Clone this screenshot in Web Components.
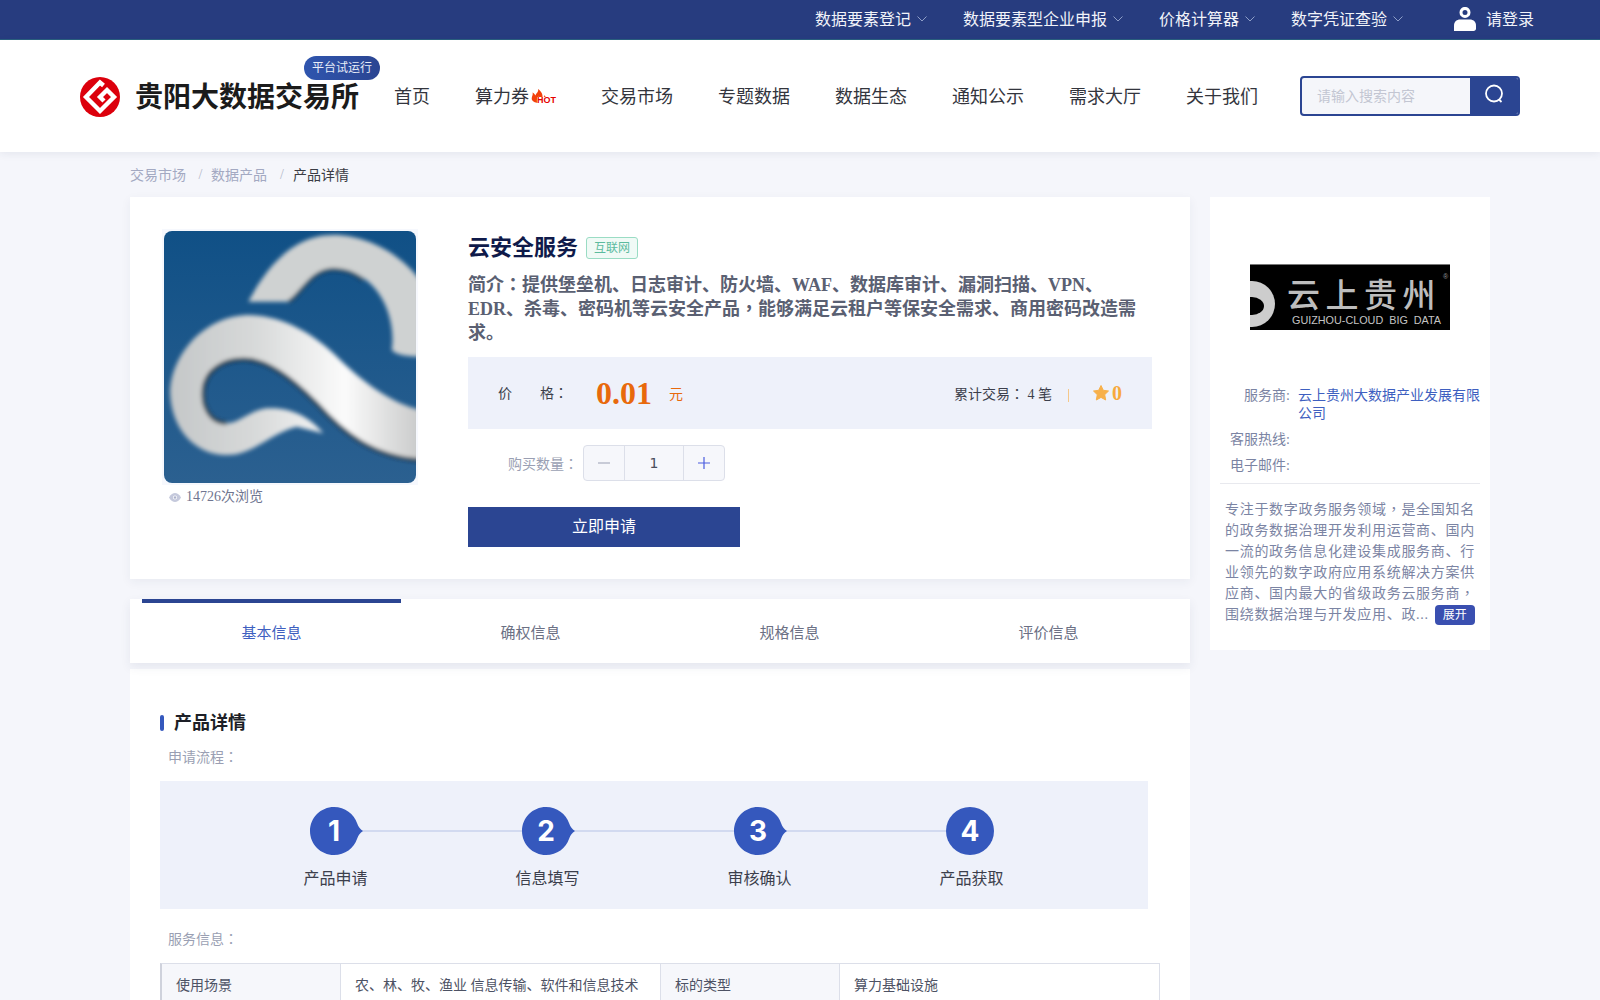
<!DOCTYPE html>
<html lang="zh-CN">
<head>
<meta charset="utf-8">
<title>云安全服务</title>
<style>
  html, body { margin: 0; height: 1000px; overflow: hidden; }
  body { background: #f5f6fb; font-family: "Liberation Serif", "Noto Sans CJK SC", serif; color: #333; }
  .page { display: grid; grid-template-columns: 1060px 280px; column-gap: 20px; padding-left: 130px; }
  .left { display: flex; flex-direction: column; }
</style>
</head>
<body>
<top-bar>
  <top-link>数据要素登记</top-link>
  <top-link>数据要素型企业申报</top-link>
  <top-link>价格计算器</top-link>
  <top-link>数字凭证查验</top-link>
</top-bar>
<site-header></site-header>
<bread-crumb></bread-crumb>
<div class="page">
  <div class="left">
    <product-card></product-card>
    <tab-bar></tab-bar>
    <detail-panel></detail-panel>
  </div>
  <provider-card></provider-card>
</div>

<script>
// the reference sets full-width colon and comma in the middle of their box
const pn = s => s.split(/([：，])/).map((part, i) => i % 2
    ? `<span lang="zh-TW" style="font-family:'Liberation Serif','Noto Sans CJK TC',serif">${part}</span>`
    : part && `<span>${part}</span>`).join('');

class TopLink extends HTMLElement {
    connectedCallback() {
        this.attachShadow({ mode: 'open' });
        this.shadowRoot.innerHTML = `
        <style>
          :host { display: flex; align-items: center; gap: 6px; font-size: 16px; color: #f1f3f9; }
          svg { width: 10px; height: 6px; margin-top: 2px; }
        </style>
        <slot></slot>
        <svg viewBox="0 0 10 6"><path d="M.5 .5 5 5 9.5 .5" fill="none" stroke="#8f9fc8" stroke-width="1"/></svg>`;
    }
}
customElements.define('top-link', TopLink);

class TopBar extends HTMLElement {
    connectedCallback() {
        this.attachShadow({ mode: 'open' });
        this.shadowRoot.innerHTML = `
        <style>
          :host { display: flex; justify-content: flex-end; align-items: center; gap: 36px; height: 35px;
            padding: 0 66px 4px 0; background: #273c7f; border-bottom: 1px solid #2a5f7f; }
          .login { display: flex; align-items: center; gap: 10px; margin-left: 15px; font-size: 16px; color: #f1f3f9; }
          svg { width: 22px; height: 24px; margin-top: 3px; }
        </style>
        <slot></slot>
        <div class="login">
          <svg viewBox="0 0 22 24">
            <circle cx="11" cy="5.400" r="4" fill="#273c7f" stroke="#fff" stroke-width="3"/>
            <path d="M0 24V18.500C0 14.500 3 12.500 6 12.500H16C19 12.500 22 14.500 22 18.500V21.500C22 23 21 24 19.500 24Z" fill="#fff"/>
          </svg>
          <span>请登录</span>
        </div>`;
    }
}
customElements.define('top-bar', TopBar);

class SiteHeader extends HTMLElement {
    connectedCallback() {
        const links = ['首页', '算力券', '交易市场', '专题数据', '数据生态', '通知公示', '需求大厅', '关于我们'];
        this.attachShadow({ mode: 'open' });
        this.shadowRoot.innerHTML = `
        <style>
          :host { display: flex; align-items: center; height: 112px; padding-left: 80px; background: #fff;
            box-shadow: 0 2px 8px rgba(40, 50, 90, .08); position: relative; }
          .brand { display: flex; align-items: center; gap: 15px; position: relative; width: 280px; margin-top: 2px; }
          .brand svg { width: 40px; height: 40px; flex: none; }
          .name { font-size: 28px; color: #1b1b1b; font-weight: 600; white-space: nowrap; margin-top: -4px; }
          .badge { position: absolute; left: 224px; top: -21px; width: 76px; height: 24px; border-radius: 12px;
            background: linear-gradient(90deg, #2f55ae, #2b4592); color: #e8edf8; font-size: 12px;
            text-align: center; line-height: 24px; }
          nav { display: flex; gap: 45px; margin: -2px 0 0 34px; font-size: 18px; color: #33353d; align-items: center; }
          .hot { display: flex; align-items: center; }
          .hot-mark { position: relative; width: 25px; height: 14px; margin: 5px 0 0 2px; display: block; }
          .hot-mark svg { position: absolute; left: 0; top: -2px; width: 17px; height: 14px; }
          .hot-mark b { position: absolute; left: 6px; top: 6px; font: bold 9px/7px "Liberation Sans", sans-serif;
            color: #e60000; background: #fff; }
          .search { display: flex; width: 220px; height: 40px; margin-left: 42px; box-sizing: border-box;
            border: 2px solid #2b4592; border-radius: 4px; overflow: hidden; background: #f5f6fa; }
          .search span { flex: 1; padding-left: 15px; font-size: 14px; line-height: 38px; color: #c3c6d2; }
          .search div { width: 48px; background: #2b4592; display: flex; align-items: center; justify-content: center; }
          .search svg { width: 20px; height: 20px; margin-top: -5px; }
        </style>
        <div class="brand">
          <svg viewBox="0 0 40 40">
            <circle cx="20" cy="20" r="20" fill="#dc000c"/>
            <path d="M23.500 8.500 20 5.500 6 20 20 34 34 20 27 13 20 20 24 24" fill="none" stroke="#fff" stroke-width="4.400" stroke-linejoin="miter"/>
          </svg>
          <span class="name">贵阳大数据交易所</span>
          <span class="badge">平台试运行</span>
        </div>
        <nav>
          ${links.map(t => t === '算力券'
            ? `<span class="hot"><span>${t}</span><span class="hot-mark"><svg viewBox="0 0 17 14"><path d="M7 0C8 3 5 4 4.500 6.500 3.500 5 3 4 1.500 3.500 2.500 6 0 8 1 11 2 13 5 14 8 14H15C16 11 15 8 13.500 6 13.500 7.500 12.500 8.500 11.500 8.500 12 5 10 2 7 0Z" fill="#f2400c"/><path d="M7 7C7.500 9 5 10 6 13H11C12 11 11 10 10 9 9.800 10 9 10.500 8.500 10 8.500 9 8 8 7 7Z" fill="#ffc21a"/></svg><b>HOT</b></span></span>`
            : `<span>${t}</span>`).join('')}
        </nav>
        <div class="search">
          <span>请输入搜索内容</span>
          <div><svg viewBox="0 0 20 20"><circle cx="10" cy="9.500" r="8" fill="none" stroke="#fff" stroke-width="1.800"/><path d="M15 15.500 17.500 18" stroke="#fff" stroke-width="1.800"/></svg></div>
        </div>`;
    }
}
customElements.define('site-header', SiteHeader);

class BreadCrumb extends HTMLElement {
    connectedCallback() {
        this.attachShadow({ mode: 'open' });
        this.shadowRoot.innerHTML = `
        <style>
          :host { display: flex; align-items: center; height: 43px; padding: 0 0 2px 130px; font-size: 14px; color: #a3a9c2; }
          i { font-style: normal; width: 25px; text-align: center; color: #b4b8c9; transform: translate(2px, 1px); }
          i:nth-of-type(2) { width: 26px; }
          b { font-weight: normal; color: #3a3c44; }
        </style>
        <span>交易市场</span><i>/</i><span>数据产品</span><i>/</i><b>产品详情</b>`;
    }
}
customElements.define('bread-crumb', BreadCrumb);

class ProductCard extends HTMLElement {
    connectedCallback() {
        const intro = [
            '简介：提供堡垒机、日志审计、防火墙、WAF、数据库审计、漏洞扫描、VPN、',
            'EDR、杀毒、密码机等云安全产品，能够满足云租户等保安全需求、商用密码改造需',
            '求。'
        ];
        this.attachShadow({ mode: 'open' });
        this.shadowRoot.innerHTML = `
        <style>
          :host { display: flex; height: 382px; box-sizing: border-box; padding: 32px 0 0 32px; background: #fff;
            box-shadow: 0 3px 10px rgba(40, 50, 90, .06); }
          .media { width: 256px; margin-right: 50px; flex: none; }
          .pic { width: 252px; height: 252px; padding: 2px; background: #f6f8fd; display: block; }
          .pic svg { display: block; width: 252px; height: 252px; border-radius: 8px; }
          .views { display: flex; align-items: center; gap: 5px; margin: 2px 0 0 7px; font-size: 14px; line-height: 20px; color: #6f7590; }
          .views svg { width: 12px; height: 9px; }
          .info { width: 684px; }
          .title { display: flex; align-items: center; height: 30px; margin-top: 1px; }
          h1 { margin: 0; font-size: 22px; font-weight: 700; color: #0f1a4a; }
          .tag { margin: 6px 0 0 8px; width: 52px; height: 22px; box-sizing: border-box; border: 1px solid #9adcc4; border-radius: 3px;
            background: #f0faf6; color: #5cbb9e; font-size: 12px; line-height: 20px; text-align: center; }
          .intro { margin: 13px 0 0; font-size: 18px; line-height: 24px; font-weight: 700; color: #5a6072; white-space: nowrap; }
          .band { display: flex; align-items: center; height: 72px; margin-top: 12px; padding: 0 30px; background: #eef1fa; font-size: 14px; color: #3c3f4c; }
          .lab { margin-top: -2px; }
          .price { margin-left: 28px; font-size: 32px; font-weight: 700; color: #e8690c; }
          .unit { margin-left: 17px; color: #e8690c; }
          .stat { margin-left: auto; }
          .sep { width: 1px; height: 13px; margin: 4px 24px 0 16px; background: #f5c88a; }
          .star { width: 16px; height: 16px; margin-right: 3px; }
          .score { font-size: 20px; font-weight: 700; color: #f7a93c; line-height: 20px; }
          .qty { display: flex; align-items: center; margin-top: 16px; padding-left: 40px; }
          .qty label { width: 70px; margin-right: 5px; font-size: 14px; color: #9a9fb3; white-space: nowrap; }
          .stepper { display: flex; width: 142px; height: 36px; box-sizing: border-box; border: 1px solid #dcdfe9; border-radius: 4px; background: #f6f7fb; overflow: hidden; }
          .stepper span { display: flex; align-items: center; justify-content: center; }
          .stepper span:first-child, .stepper span:last-child { width: 40px; }
          .stepper span:nth-child(2) { flex: 1; border: solid #dcdfe9; border-width: 0 1px; font: 14px "DejaVu Sans", sans-serif; color: #4a4e5c; }
          .stepper svg { width: 12px; height: 12px; }
          .apply { display: block; width: 272px; height: 40px; margin-top: 26px; background: #2b4592; color: #fff; font-size: 16px; line-height: 40px; text-align: center; }
        </style>
        <div class="media">
          <div class="pic"><svg viewBox="132 93 756 756" preserveAspectRatio="none">
            <defs>
              <linearGradient id="sky" x1="0" y1="0" x2="0" y2="1"><stop offset="0" stop-color="#105086"/><stop offset="1" stop-color="#2b6090"/></linearGradient>
              <linearGradient id="silver" x1="0" y1="0" x2="1" y2="0"><stop offset="0" stop-color="#c4c7c8"/><stop offset=".35" stop-color="#d8dada"/><stop offset=".7" stop-color="#fbfbfb"/><stop offset="1" stop-color="#c9caca"/></linearGradient>
              <filter id="soft"><feGaussianBlur stdDeviation="6"/></filter>
            </defs>
            <rect x="132" y="93" width="756" height="756" fill="url(#sky)"/>
            <g filter="url(#soft)">
              <path d="M385 305C440 200 520 105 640 105 740 105 840 160 900 240V470C860 470 830 465 815 450 830 360 780 208 640 208 570 208 540 290 505 305Z" fill="#cfd2d2"/>
              <path d="M900 630C820 610 740 560 640 460 560 385 470 345 380 345 260 350 160 450 150 570 150 680 220 765 320 765 400 765 450 700 530 680L610 700C570 650 510 620 440 625 390 630 360 670 320 670 270 670 245 620 250 570 255 510 310 478 370 478 440 478 510 530 590 610 670 700 760 770 900 780Z" fill="url(#silver)"/>
              <path d="M250 570C255 510 310 478 370 478 440 478 510 530 590 610 670 700 760 770 900 780" fill="none" stroke="#23282e" stroke-width="9"/>
              <path d="M505 305C540 290 570 208 640 208 670 208 700 215 730 240" fill="none" stroke="#23282e" stroke-width="7"/>
              <path d="M250 570C245 620 270 670 320 670" fill="none" stroke="#30383c" stroke-width="9"/>
            </g>
          </svg></div>
          <div class="views">
            <svg viewBox="0 0 12 9"><path d="M0 4.500C2 1 4 0 6 0S10 1 12 4.500C10 8 8 9 6 9S2 8 0 4.500Z" fill="#c5c9dc"/><circle cx="6" cy="4.500" r="2" fill="#fff"/><circle cx="6" cy="4.500" r="1.200" fill="#aab0c9"/></svg>
            <span>14726次浏览</span>
          </div>
        </div>
        <div class="info">
          <div class="title"><h1>云安全服务</h1><span class="tag">互联网</span></div>
          <p class="intro">${intro.map(pn).join('<br>')}</p>
          <div class="band">
            <span class="lab">${pn('价&emsp;&emsp;格：')}</span>
            <span class="price">0.01</span>
            <span class="unit">元</span>
            <span class="stat">${pn('累计交易： 4 笔')}</span>
            <span class="sep"></span>
            <svg class="star" viewBox="0 0 16 16"><path d="M8 .5 10.300 5.300 15.500 6 11.700 9.700 12.700 15 8 12.400 3.300 15 4.300 9.700 .5 6 5.700 5.300Z" fill="#f7b04a" stroke="#f7b04a" stroke-linejoin="round"/></svg>
            <span class="score">0</span>
          </div>
          <div class="qty">
            <label>${pn('购买数量：')}</label>
            <div class="stepper">
              <span><svg viewBox="0 0 12 12"><path d="M0 6H12" stroke="#9a9fb3" stroke-width="1.200"/></svg></span>
              <span>1</span>
              <span><svg viewBox="0 0 12 12"><path d="M0 6H12M6 0V12" stroke="#4a5ce0" stroke-width="1.200"/></svg></span>
            </div>
          </div>
          <div class="apply">立即申请</div>
        </div>`;
    }
}
customElements.define('product-card', ProductCard);

class TabBar extends HTMLElement {
    connectedCallback() {
        const tabs = ['基本信息', '确权信息', '规格信息', '评价信息'];
        this.attachShadow({ mode: 'open' });
        this.shadowRoot.innerHTML = `
        <style>
          :host { display: flex; height: 64px; margin-top: 20px; padding: 0 12px; background: #fff;
            box-shadow: 0 4px 10px rgba(40, 50, 90, .08); position: relative; }
          span { width: 259px; height: 64px; box-sizing: border-box; border-top: 4px solid transparent;
            font-size: 15px; line-height: 60px; text-align: center; color: #6b7084; }
          .on { border-top-color: #2b4592; color: #3e5fc0; }
        </style>
        ${tabs.map((t, i) => `<span class="${i ? '' : 'on'}">${t}</span>`).join('')}`;
    }
}
customElements.define('tab-bar', TabBar);

class ProcessSteps extends HTMLElement {
    connectedCallback() {
        const steps = ['产品申请', '信息填写', '审核确认', '产品获取'];
        this.attachShadow({ mode: 'open' });
        this.shadowRoot.innerHTML = `
        <style>
          :host { display: flex; height: 128px; box-sizing: border-box; padding-left: 68px; background: #eef1fa; }
          .step { position: relative; width: 212px; display: flex; flex-direction: column; align-items: center; padding-top: 26px; }
          .step::after { content: ""; position: absolute; left: 130px; width: 164px; top: 49px; height: 2px; background: #d2daf0; }
          .step:last-child::after { display: none; }
          .dot { position: relative; width: 48px; height: 48px; z-index: 1; }
          .dot svg { position: absolute; left: 0; top: 0; width: 54px; height: 48px; }
          .dot b { position: absolute; inset: 0; font: 700 28px/48px Inter, sans-serif; color: #fff; text-align: center; }
          .label { margin-top: 12px; font-size: 16px; line-height: 24px; color: #3c3f4c; white-space: nowrap; padding-left: 3px; }
        </style>
        ${steps.map((t, i) => `<div class="step"><div class="dot">
          <svg viewBox="0 0 54 48">${i < 3
            ? '<path d="M24 0C35 0 44 7 47 16 48.500 20 50 22 53 24 50 26 48.500 28 47 32 44 41 35 48 24 48 10.700 48 0 37.300 0 24S10.700 0 24 0Z" fill="#3558bd"/>'
            : '<circle cx="24" cy="24" r="24" fill="#3558bd"/>'}</svg>
          <b>${i + 1}</b></div><div class="label">${t}</div></div>`).join('')}`;
    }
}
customElements.define('process-steps', ProcessSteps);

class InfoTable extends HTMLElement {
    connectedCallback() {
        this.attachShadow({ mode: 'open' });
        this.shadowRoot.innerHTML = `
        <style>
          :host { display: grid; grid-template-columns: 179px 320px 179px 320px; width: 1000px; box-sizing: border-box;
            border-top: 1px solid #dcdfe9; border-left: 2px solid #cfd2dc; font-size: 14px; line-height: 44px; color: #4d5264; }
          span { padding-left: 14px; border-right: 1px solid #dcdfe9; border-bottom: 1px solid #dcdfe9; white-space: nowrap; box-sizing: border-box; }
          .key { background: #f6f7fb; }
        </style>
        <span class="key">使用场景</span><span>农、林、牧、渔业 信息传输、软件和信息技术</span>
        <span class="key">标的类型</span><span>算力基础设施</span>`;
    }
}
customElements.define('info-table', InfoTable);

class DetailPanel extends HTMLElement {
    connectedCallback() {
        this.attachShadow({ mode: 'open' });
        this.shadowRoot.innerHTML = `
        <style>
          :host { display: block; height: 500px; margin-top: 6px; padding: 41px 0 0 30px; background: #fff; }
          h2 { display: flex; align-items: center; gap: 10px; margin: 0; font-size: 18px; line-height: 26px; font-weight: 700; color: #1d1f27; }
          h2::before { content: ""; width: 4px; height: 16px; border-radius: 2px; background: #3558bd; }
          .sub { margin: 0 0 0 8px; font-size: 14px; line-height: 20px; color: #9a9fb3; }
          .s1 { margin-top: 12px; margin-bottom: 13px; }
          .s2 { margin-top: 21px; margin-bottom: 13px; }
          process-steps { width: 988px; }
        </style>
        <h2>产品详情</h2>
        <p class="sub s1">${pn('申请流程：')}</p>
        <process-steps></process-steps>
        <p class="sub s2">${pn('服务信息：')}</p>
        <info-table></info-table>`;
    }
}
customElements.define('detail-panel', DetailPanel);

class InfoRow extends HTMLElement {
    connectedCallback() {
        this.attachShadow({ mode: 'open' });
        this.shadowRoot.innerHTML = `
        <style>
          :host { display: grid; grid-template-columns: 80px 182px; column-gap: 8px; font-size: 14px; line-height: 18px; margin-top: 8px; color: #3e5fc0; }
          span { text-align: right; color: #7b84a3; }
        </style>
        <span>${this.getAttribute('label')}</span><div><slot></slot></div>`;
    }
}
customElements.define('info-row', InfoRow);

class ProviderCard extends HTMLElement {
    connectedCallback() {
        const about = [
            '专注于数字政务服务领域，是全国知名',
            '的政务数据治理开发利用运营商、国内',
            '一流的政务信息化建设集成服务商、行',
            '业领先的数字政府应用系统解决方案供',
            '应商、国内最大的省级政务云服务商，',
            '围绕数据治理与开发应用、政...'
        ];
        this.attachShadow({ mode: 'open' });
        this.shadowRoot.innerHTML = `
        <style>
          :host { display: block; height: 453px; box-sizing: border-box; padding: 67px 10px 0 0; background: #fff; }
          .logo { display: block; width: 200px; height: 66px; margin: 0 0 57px 40px; }
          hr { height: 1px; margin: 8px 0 0 10px; border: 0; background: #e8e9ee; }
          .about { margin: 15px 0 0 15px; font-size: 14px; line-height: 21px; letter-spacing: .7px; color: #7b84a3; white-space: nowrap; }
          .more { display: inline-block; width: 40px; height: 20px; margin-left: 6px; border-radius: 4px; background: #3a4fb0; color: #fff;
            font-size: 12px; line-height: 20px; letter-spacing: 0; text-align: center; }
        </style>
        <svg class="logo" viewBox="0 0 200 66">
          <rect width="200" height="66" fill="#000"/>
          <rect width="200" height="1" fill="#777"/>
          <circle cx="2" cy="40" r="23" fill="#cdcdcd"/>
          <ellipse cx="2" cy="42" rx="12" ry="9" fill="#000"/>
          <text x="37" y="43" font-family="Noto Sans CJK SC" font-size="33" font-weight="500" fill="#bdbdbd" letter-spacing="5.500">云上贵州</text>
          <text x="42" y="60" font-family="Liberation Sans" font-size="11.500" fill="#c4c4c4" textLength="149" lengthAdjust="spacingAndGlyphs" xml:space="preserve">GUIZHOU-CLOUD  BIG  DATA</text>
          <text x="193" y="15" font-family="Liberation Sans" font-size="7" fill="#999">®</text>
        </svg>
        <info-row label="服务商:">云上贵州大数据产业发展有限公司</info-row>
        <info-row label="客服热线:"></info-row>
        <info-row label="电子邮件:"></info-row>
        <hr>
        <div class="about">${about.map(pn).join('<br>')}<span class="more">展开</span></div>`;
    }
}
customElements.define('provider-card', ProviderCard);
</script>
</body>
</html>
